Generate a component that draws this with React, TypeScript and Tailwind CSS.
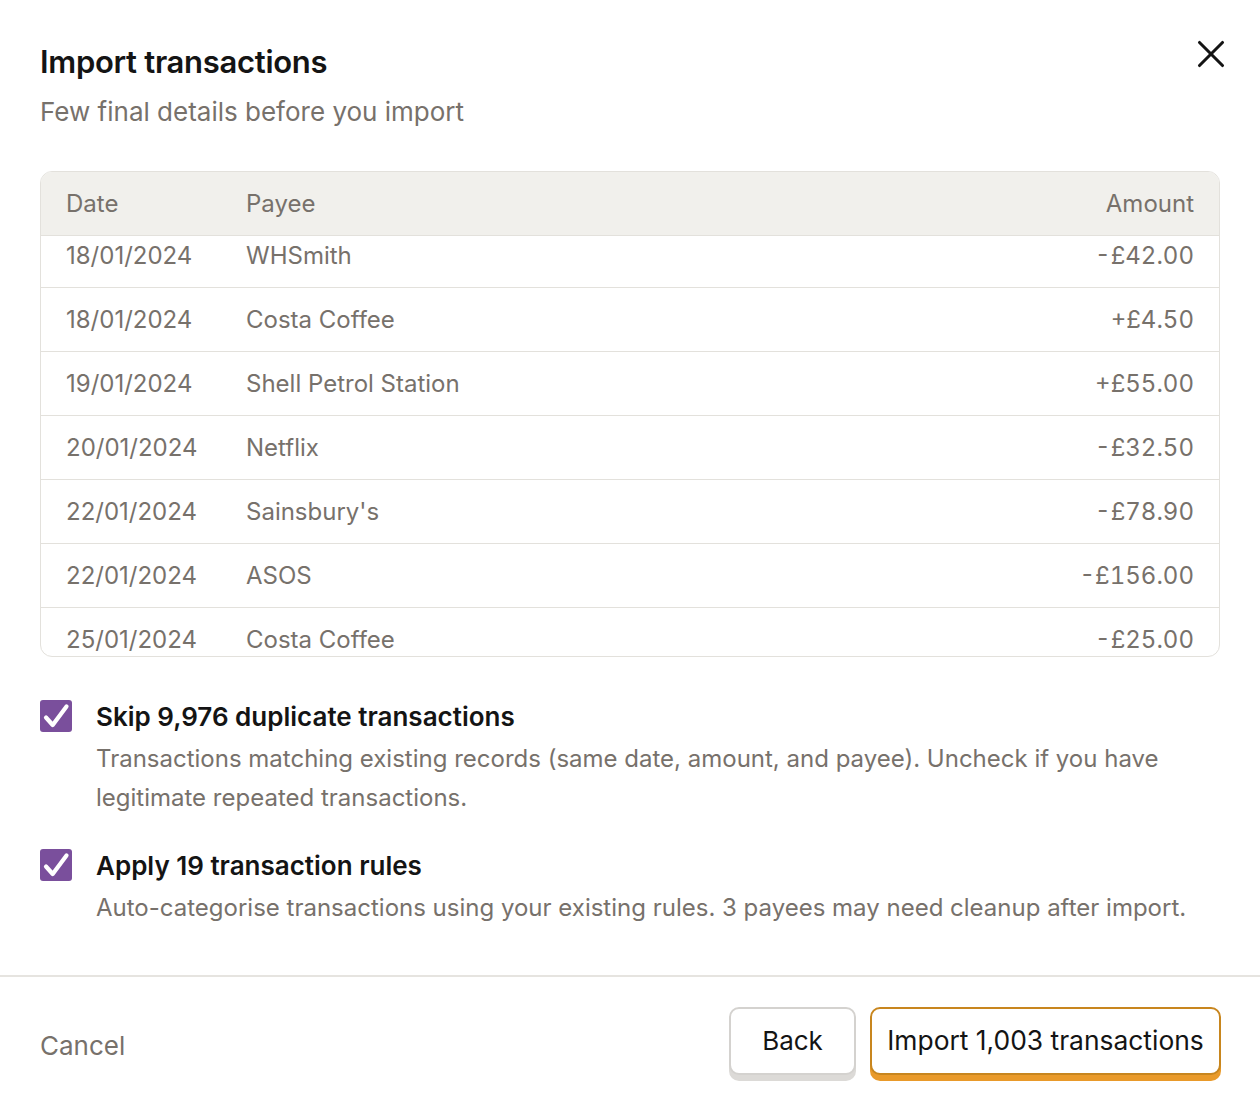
import { X } from 'lucide-react'

interface Txn {
  date: string
  payee: string
  amount: string
}

const txns: Txn[] = [
  { date: '18/01/2024', payee: 'WHSmith', amount: '-£42.00' },
  { date: '18/01/2024', payee: 'Costa Coffee', amount: '+£4.50' },
  { date: '19/01/2024', payee: 'Shell Petrol Station', amount: '+£55.00' },
  { date: '20/01/2024', payee: 'Netflix', amount: '-£32.50' },
  { date: '22/01/2024', payee: "Sainsbury's", amount: '-£78.90' },
  { date: '22/01/2024', payee: 'ASOS', amount: '-£156.00' },
  { date: '25/01/2024', payee: 'Costa Coffee', amount: '-£25.00' },
]

const Option = ({ title, body }: { title: string; body: string }) => (
  <div className="flex gap-6">
    <div className="w-8 h-8 shrink-0 rounded-[3px] bg-[#7a4f9c] flex items-center justify-center">
      <svg viewBox="0 0 32 32" className="w-8 h-8" fill="none">
        <path
          d="M6 17.5 L12.7 25 L26.5 6.5"
          stroke="#fff"
          strokeWidth={4.2}
          strokeLinecap="round"
          strokeLinejoin="round"
        />
      </svg>
    </div>
    <div>
      <div className="text-[26px] leading-[34px] font-semibold text-[#141414]">{title}</div>
      <p className="mt-[5px] text-[24px] leading-[39px] text-[#77716b]">{body}</p>
    </div>
  </div>
)

export default function App() {
  return (
    <div className="w-[1260px] h-[1100px] bg-white font-['Inter',sans-serif] flex flex-col">
      {/* Header */}
      <div className="flex justify-between px-10 pt-[42px]">
        <div>
          <h1 className="text-[31px] leading-[40px] font-semibold text-[#141414] tracking-[-0.3px]">
            Import transactions
          </h1>
          <p className="mt-[15px] text-[26px] leading-[30px] text-[#77716b]">
            Few final details before you import
          </p>
        </div>
        <button className="mt-[-11px] mr-[-14px] h-[46px] w-[46px] flex items-center justify-center text-[#141414]">
          <X className="w-[46px] h-[46px]" strokeWidth={1.6} />
        </button>
      </div>

      {/* Transactions preview */}
      <div className="mx-10 mt-[44px] border border-[#e3e1dc] rounded-[12px] overflow-hidden">
        <div className="h-[64px] bg-[#f1f0ec] border-b border-[#e3e1dc] flex items-center px-[25px] text-[24px] text-[#77716b]">
          <div className="w-[180px]">Date</div>
          <div className="flex-1">Payee</div>
          <div>Amount</div>
        </div>
        <div className="h-[420px] overflow-hidden">
          <div className="-mt-[12px]">
            {txns.map((t, i) => (
              <div
                key={i}
                className="h-[64px] border-b border-[#e3e1dc] flex items-center px-[25px] text-[24px] text-[#77716b]"
              >
                <div className="w-[180px]">{t.date}</div>
                <div className="flex-1">{t.payee}</div>
                <div className="tabular-nums">{t.amount}</div>
              </div>
            ))}
          </div>
        </div>
      </div>

      {/* Options */}
      <div className="px-10 mt-[43px] flex flex-col gap-[32px]">
        <Option
          title="Skip 9,976 duplicate transactions"
          body="Transactions matching existing records (same date, amount, and payee). Uncheck if you have legitimate repeated transactions."
        />
        <Option
          title="Apply 19 transaction rules"
          body="Auto-categorise transactions using your existing rules. 3 payees may need cleanup after import."
        />
      </div>

      {/* Footer */}
      <div className="mt-auto border-t-2 border-[#e6e4e0] h-[125px] flex items-center justify-between pl-10 pr-[39px]">
        <button className="text-[26px] text-[#77716b] mt-[14px]">Cancel</button>
        <div className="flex gap-[14px] mt-[4px]">
          <button className="h-[68px] w-[127px] rounded-[10px] border-2 border-[#d4d2cf] bg-white shadow-[0_6px_0_#dcdad7] text-[26px] text-[#141414]">
            Back
          </button>
          <button className="h-[68px] w-[351px] rounded-[10px] border-2 border-[#c8861e] bg-white shadow-[0_6px_0_#e99a2a] text-[26.4px] text-[#141414]">
            Import 1,003 transactions
          </button>
        </div>
      </div>
    </div>
  )
}
